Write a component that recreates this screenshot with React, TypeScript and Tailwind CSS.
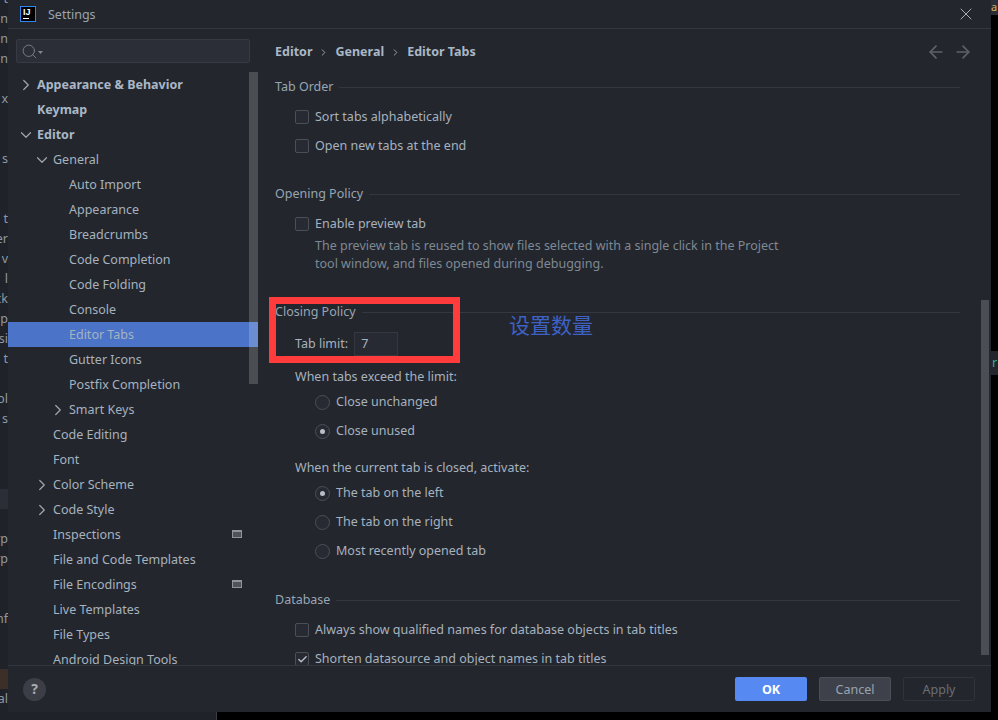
import React from 'react'
import { ChevronDown, ChevronRight, ArrowLeft, ArrowRight, X, Search, Check } from 'lucide-react'

type TreeRow = { label: string; depth: number; bold?: boolean; arrow?: 'right' | 'down'; selected?: boolean; badge?: boolean }

const treeRows: TreeRow[] = [
  { label: 'Appearance & Behavior', depth: 0, bold: true, arrow: 'right' },
  { label: 'Keymap', depth: 0, bold: true },
  { label: 'Editor', depth: 0, bold: true, arrow: 'down' },
  { label: 'General', depth: 1, arrow: 'down' },
  { label: 'Auto Import', depth: 2 },
  { label: 'Appearance', depth: 2 },
  { label: 'Breadcrumbs', depth: 2 },
  { label: 'Code Completion', depth: 2 },
  { label: 'Code Folding', depth: 2 },
  { label: 'Console', depth: 2 },
  { label: 'Editor Tabs', depth: 2, selected: true },
  { label: 'Gutter Icons', depth: 2 },
  { label: 'Postfix Completion', depth: 2 },
  { label: 'Smart Keys', depth: 2, arrow: 'right' },
  { label: 'Code Editing', depth: 1 },
  { label: 'Font', depth: 1 },
  { label: 'Color Scheme', depth: 1, arrow: 'right' },
  { label: 'Code Style', depth: 1, arrow: 'right' },
  { label: 'Inspections', depth: 1, badge: true },
  { label: 'File and Code Templates', depth: 1 },
  { label: 'File Encodings', depth: 1, badge: true },
  { label: 'Live Templates', depth: 1 },
  { label: 'File Types', depth: 1 },
  { label: 'Android Design Tools', depth: 1 },
]

// rows of the IDE window behind the dialog, only their last letters show
const behindRows: { text?: string; band?: string }[] = [
  { text: 't' }, { text: 'n' }, { text: 'n' }, { text: 'n' }, {}, { text: 'x' }, {}, {}, { text: 's' }, {}, {},
  { text: 't' }, { text: 'er' }, { text: 'v' }, { text: 'l' }, { text: 'ck' }, { text: 'p' }, { text: 'si' }, { text: 't' }, {},
  { text: 'bl' }, { text: 's' }, {}, {}, {}, { band: 'bg-[#2b2e36]' }, {},
  { text: 'rp' }, { text: 'rp' }, {}, {}, { text: 'nf' }, {}, {}, { band: 'bg-[#3b2f28]' }, { text: 'al' },
]

function BehindStrip() {
  return (
    <div className="absolute left-0 top-[-11px] w-2 h-[731px] bg-[#1f2228] overflow-hidden text-[#8f99a3]">
      {behindRows.map((row, i) => (
        <div key={i} className={`flex justify-end h-5 leading-5 overflow-hidden whitespace-nowrap ${row.band ?? ''}`}>
          {row.text}
        </div>
      ))}
    </div>
  )
}

function Tree() {
  return (
    <div className="flex-1 min-h-0 overflow-hidden pt-[9px]">
      {treeRows.map((row) => (
        <div key={row.label} className={`relative flex items-center h-[25px] ${row.selected ? 'bg-[#4b74c9]' : ''}`}>
          <div className={`w-4 flex justify-center shrink-0 ${row.depth === 0 ? 'ml-[10px]' : row.depth === 1 ? 'ml-[26px]' : 'ml-[42px]'}`}>
            {row.arrow === 'right' && <ChevronRight size={18} strokeWidth={1.6} className="shrink-0 text-[#a0a6ad]" />}
            {row.arrow === 'down' && <ChevronDown size={18} strokeWidth={1.6} className="shrink-0 text-[#a0a6ad]" />}
          </div>
          <span className={`ml-[3px] ${row.bold ? 'font-bold text-[#a9b7c6]' : 'text-[#a6b2bf]'}`}>{row.label}</span>
          {row.badge && (
            <div className="absolute left-[224px] top-[8px] w-[10px] h-[8px] border border-[#8f949a] bg-[#50535a] flex flex-col">
              <div className="h-px bg-[#8f949a]"></div>
            </div>
          )}
        </div>
      ))}
    </div>
  )
}

function Section({ title, children, className }: { title: string; children: React.ReactNode; className: string }) {
  return (
    <section className={className}>
      <div className="flex items-center h-[18px]">
        <span className="text-[#98a5b3]">{title}</span>
        <div className="flex-1 h-px bg-[#33373f] ml-[6px]"></div>
      </div>
      {children}
    </section>
  )
}

function CheckRow({ label, checked, className }: { label: string; checked?: boolean; className?: string }) {
  return (
    <div className={`flex items-center h-[18px] ml-5 ${className ?? ''}`}>
      <div className="w-[14px] h-[14px] rounded-[2px] border border-[#4a4f58] bg-[#272a33] flex items-center justify-center mr-[6px]">
        {checked && <Check size={11} strokeWidth={3} className="text-[#b8bec6]" />}
      </div>
      <span>{label}</span>
    </div>
  )
}

function RadioRow({ label, checked, className }: { label: string; checked?: boolean; className?: string }) {
  return (
    <div className={`flex items-center h-[18px] ml-10 ${className ?? ''}`}>
      <div className="w-[15px] h-[15px] rounded-full border border-[#4a4f58] bg-[#272a33] flex items-center justify-center mr-[6px]">
        {checked && <div className="w-[5px] h-[5px] rounded-full bg-[#b8bec6]"></div>}
      </div>
      <span>{label}</span>
    </div>
  )
}

export default function App() {
  return (
    <div className="relative w-[998px] h-[720px] overflow-hidden bg-black text-[12.5px] leading-[18px] text-[#a6b2bf] font-['Noto_Sans','Open_Sans',sans-serif]">
      {/* IDE window peeking out behind the dialog */}
      <BehindStrip />
      <div className="absolute left-0 bottom-0 w-[217px] h-2 bg-[#1f2228] border-r border-[#3a3d44]"></div>
      <div className="absolute left-[991px] top-0 w-[7px] h-[15px] bg-[#2b2e36] overflow-hidden text-[#d8b25a] text-[11px] leading-[13px]">a</div>
      <div className="absolute left-[990px] top-[351px] w-2 h-6 bg-[#23262d] overflow-hidden text-[#2fb592] leading-6 pl-[2px]">r</div>

      <div className="absolute left-[8px] top-0 w-[983px] h-[712px] bg-[#23262d] flex flex-col">
        {/* title bar */}
        <div className="flex items-center h-[29px] shrink-0 border-b border-[#33373f]">
          <div className="ml-3 w-4 h-4 border border-[#2f86ee] bg-black relative text-white font-['Liberation_Sans',sans-serif] font-bold text-[9px] leading-[11px] pl-[2px]">
            IJ
            <div className="absolute left-[2px] bottom-[2px] w-[6px] h-px bg-white"></div>
          </div>
          <span className="ml-3 mt-[2px] text-[#98a5b3]">Settings</span>
          <X size={20} strokeWidth={1.2} className="ml-auto mr-[15px] text-[#a8adb3]" />
        </div>

        <div className="flex flex-1 min-h-0">
          {/* left panel */}
          <aside className="w-[250px] shrink-0 relative flex flex-col">
            <div className="ml-2 mt-[10px] w-[234px] h-6 shrink-0 rounded-[2px] border border-[#363a43] bg-[#2b2e37] flex items-center pl-[4px] text-[#80868e]">
              <Search size={17} strokeWidth={1.2} />
              <svg width="5" height="3" viewBox="0 0 5 3" className="mt-[3px]">
                <polygon points="0,0 5,0 2.5,3" fill="#80868e" />
              </svg>
            </div>
            <Tree />
            <div className="absolute right-0 top-[43px] w-[9px] h-[312px] bg-white/[0.18]"></div>
          </aside>

          {/* right panel */}
          <main className="flex-1 min-w-0 relative flex flex-col">
            <div className="flex items-center h-[45px] shrink-0 pt-px pl-[17px] font-bold text-[#a9b7c6]">
              <span>Editor</span>
              <ChevronRight size={11} strokeWidth={2} className="mx-[6px] text-[#a0a6ad]" />
              <span>General</span>
              <ChevronRight size={11} strokeWidth={2} className="mx-[6px] text-[#a0a6ad]" />
              <span>Editor Tabs</span>
              <ArrowLeft size={20} strokeWidth={2} className="ml-auto text-[#5f6368]" />
              <ArrowRight size={20} strokeWidth={2} className="ml-[7px] mr-[18px] text-[#5f6368]" />
            </div>
            <div className="flex-1 min-h-0 overflow-hidden pl-[17px] pr-[31px]">
              <Section title="Tab Order" className="mt-[4px]">
                <CheckRow label="Sort tabs alphabetically" className="mt-[12px]" />
                <CheckRow label="Open new tabs at the end" className="mt-[11px]" />
              </Section>
              <Section title="Opening Policy" className="mt-[30px]">
                <CheckRow label="Enable preview tab" className="mt-[12px]" />
                <p className="ml-10 mt-[4px] w-[480px] text-[#7e8994] leading-[18px]">
                  The preview tab is reused to show files selected with a single click in the Project tool window, and files opened during debugging.
                </p>
              </Section>
              <Section title="Closing Policy" className="mt-[30px]">
                <div className="flex items-center ml-5 mt-[11px] h-6">
                  <span>Tab limit:</span>
                  <div className="ml-[6px] w-[44px] h-6 border border-[#33373f] bg-[#272a33] pl-[6px] leading-[22px]">7</div>
                </div>
                <div className="ml-5 mt-[12px]">When tabs exceed the limit:</div>
                <RadioRow label="Close unchanged" className="mt-[7px]" />
                <RadioRow label="Close unused" checked className="mt-[11px]" />
                <div className="ml-5 mt-[19px]">When the current tab is closed, activate:</div>
                <RadioRow label="The tab on the left" checked className="mt-[7px]" />
                <RadioRow label="The tab on the right" className="mt-[11px]" />
                <RadioRow label="Most recently opened tab" className="mt-[11px]" />
              </Section>
              <Section title="Database" className="mt-[31px]">
                <CheckRow label="Always show qualified names for database objects in tab titles" className="mt-[12px]" />
                <CheckRow label="Shorten datasource and object names in tab titles" checked className="mt-[11px]" />
              </Section>
            </div>
            <div className="absolute right-[2px] top-[271px] w-2 h-[355px] bg-[#4b4e54]"></div>
          </main>
        </div>

        {/* footer */}
        <div className="h-[47px] shrink-0 border-t border-[#33373f] flex items-center pl-[15px] pr-[16px]">
          <div className="w-[23px] h-[23px] rounded-full bg-[#3b3e46] flex items-center justify-center font-bold text-[#a8adb3] text-[14px]">?</div>
          <button className="ml-auto w-[72px] h-6 pt-px rounded-[2px] bg-[#568af2] font-bold text-white">OK</button>
          <button className="ml-3 w-[72px] h-6 pt-px rounded-[2px] border border-[#4a4e57] bg-[#3e4149] text-[#98a5b3]">Cancel</button>
          <button className="ml-3 w-[72px] h-6 pt-px rounded-[2px] border border-[#2f333a] text-[#6a6e75]">Apply</button>
        </div>
      </div>

      {/* annotation drawn over the screenshot */}
      <div className="absolute left-[269px] top-[297px] w-[191px] h-[66px] border-[7px] border-[#ff3b3b]"></div>
      <div className="absolute left-[509px] top-[312px] text-[21px] leading-6 text-[#3e62c4] font-['Noto_Sans_CJK_SC',sans-serif]">设置数量</div>
    </div>
  )
}
